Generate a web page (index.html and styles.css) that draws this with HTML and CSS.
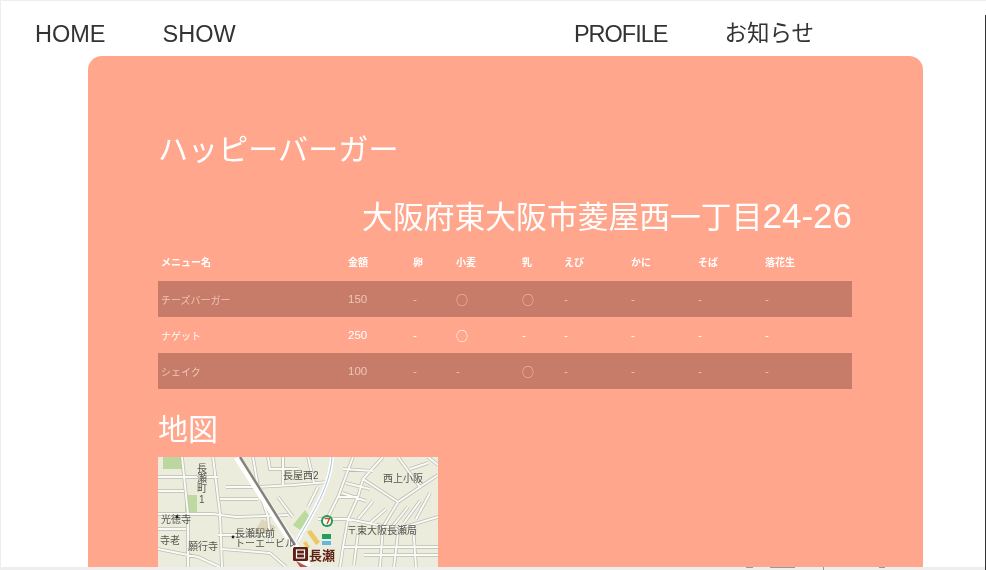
FILE: index.html
```html
<!DOCTYPE html>
<html lang="ja">
<head>
    <meta charset="UTF-8">
    <meta name="viewport" content="width=device-width, initial-scale=1.0">
    <title>ハッピーバーガー</title>
    <link rel="stylesheet" href="styles.css">
</head>
<body>
    <div class="frame">
        <nav class="nav">
            <div class="nav-group">
                <a href="#">HOME</a>
                <a href="#">SHOW</a>
            </div>
            <div class="nav-group">
                <a href="#" class="nav-tight">PROFILE</a>
                <a href="#" class="nav-kana">お知らせ</a>
            </div>
        </nav>

        <main class="card">
            <h2 class="shop-name">ハッピーバーガー</h2>
            <h2 class="shop-address">大阪府東大阪市菱屋西一丁目<span class="address-num">24-26</span></h2>

            <table class="menu">
                <thead>
                    <tr>
                        <th class="col-name">メニュー名</th>
                        <th class="col-price">金額</th>
                        <th class="col-a">卵</th>
                        <th class="col-b">小麦</th>
                        <th class="col-c">乳</th>
                        <th class="col-d">えび</th>
                        <th class="col-d">かに</th>
                        <th class="col-d">そば</th>
                        <th>落花生</th>
                    </tr>
                </thead>
                <tbody>
                    <tr class="dark">
                        <td>チーズバーガー</td><td class="num">150</td><td class="num">-</td><td class="mark">○</td><td class="mark">○</td><td class="num">-</td><td class="num">-</td><td class="num">-</td><td class="num">-</td>
                    </tr>
                    <tr>
                        <td>ナゲット</td><td class="num">250</td><td class="num">-</td><td class="mark">○</td><td class="num">-</td><td class="num">-</td><td class="num">-</td><td class="num">-</td><td class="num">-</td>
                    </tr>
                    <tr class="dark">
                        <td>シェイク</td><td class="num">100</td><td class="num">-</td><td class="num">-</td><td class="mark">○</td><td class="num">-</td><td class="num">-</td><td class="num">-</td><td class="num">-</td>
                    </tr>
                </tbody>
            </table>

            <h2 class="map-title">地図</h2>

            <svg class="map" viewBox="0 0 280 180" width="280" height="180">
                <defs>
                    <path id="roads" d="M0 57H55L78 60L130 58M0 20H60M24 0L30 57L30 110M55 0L62 57L64 110M0 92L40 100L62 110M95 0L100 30L135 28L170 25M125 0V28M150 0L156 26M100 30L110 60L112 85M60 78H110M195 0L180 40L170 60M225 0L205 22L200 40L190 62L240 72L280 60M205 22L240 45L225 70M240 0L262 30L240 45M262 30L280 18M180 40L200 40M190 62L185 90L182 110M225 70L222 110M255 68L258 110M160 62L190 62M185 90H280M120 40L135 60M110 0L112 12H140M185 12L215 14M188 26L212 32M184 36L208 44M215 44L200 62M228 52L212 66M250 50L234 70M262 44L246 66M272 36L258 62M270 0L280 8M252 12L270 6M68 30L96 30M62 42H100M0 72H28M0 34H26M64 92L112 96M112 96L128 110M160 30L150 50M200 76L196 108M240 76L236 110M206 98H280"/>
                </defs>
                <rect width="280" height="180" fill="#ebecdc"/>
                <rect x="5" y="0" width="20" height="12" fill="#bcd6a0"/>
                <rect x="27" y="38" width="12" height="17" fill="#bcd9a0"/>
                <path d="M135 68L147 53L152 60L142 73Z" fill="#bcd9a0"/>
                <path d="M104 62L118 70L112 78L98 72Z" fill="#ddd6b8"/>
                <use href="#roads" fill="none" stroke="#bcbdb4" stroke-width="3.500"/>
                <use href="#roads" fill="none" stroke="#fbfbf6" stroke-width="2"/>
                <path d="M79 0L150 110" fill="none" stroke="#fff" stroke-width="7"/>
                <path d="M82 0L137 88" fill="none" stroke="#85827c" stroke-width="2.500"/>
                <path d="M174 0C172 30 155 55 139 84" fill="none" stroke="#fff" stroke-width="4"/>
                <path d="M174 0C172 30 155 55 139 84" fill="none" stroke="#a9c3dc" stroke-width="1"/>
                <path d="M149 75L153 73L162 85L158 88ZM145 86L148 84L152 90L149 92Z" fill="#ecc763"/>
                <path d="M138 104L150 110H142Z" fill="#b4544c"/>

                <g class="map-label">
                    <text x="39" y="15">長</text>
                    <text x="39" y="25">瀬</text>
                    <text x="39" y="35">町</text>
                    <text x="41" y="46">1</text>
                    <text x="125" y="22">長屋西2</text>
                    <text x="225" y="25">西上小阪</text>
                    <text x="77" y="80">長瀬駅前</text>
                    <text x="77" y="90">トーエービル</text>
                    <text x="189" y="77">〒東大阪長瀬局</text>
                    <text x="30" y="93">願行寺</text>
                    <text x="3" y="66">光徳寺</text>
                    <text x="2" y="87">寺老</text>
                </g>
                <circle cx="75" cy="80" r="1.400" fill="#222"/>
                <circle cx="19" cy="60" r="1.400" fill="#222"/>

                <circle cx="169" cy="64" r="6" fill="#1d9a52"/>
                <circle cx="169" cy="64" r="4" fill="#fff"/>
                <path d="M166.500 61.500H171.500L169 67" fill="none" stroke="#d8472f" stroke-width="1.500"/>
                <rect x="164" y="77" width="9" height="5" fill="#22a05a"/>
                <rect x="164" y="84" width="9" height="4" fill="#62b8dd"/>

                <rect x="135" y="90" width="15" height="14" rx="1.500" fill="#5e1f14"/>
                <rect x="138.500" y="93" width="8" height="8" fill="none" stroke="#fff" stroke-width="1.200"/>
                <path d="M138.500 97H146.500" stroke="#fff" stroke-width="1"/>
                <text x="151" y="103" class="map-station">長瀬</text>
            </svg>
        </main>

        <div class="status-strip">
            <span class="tick tick-a"></span>
            <span class="tick tick-b"></span>
            <span class="tick tick-c"></span>
            <span class="tick tick-d"></span>
        </div>
    </div>
</body>
</html>
```

FILE: styles.css
```css
html, body {
    margin: 0;
    padding: 0;
    height: 100%;
    overflow: hidden;
}

body {
    font-family: "Liberation Sans", "Noto Sans CJK JP", sans-serif;
    background: #fff;
    color: #333;
}

.frame {
    position: relative;
    height: 570px;
    box-sizing: border-box;
    overflow: hidden;
    border-top: 1px solid #eee;
    border-left: 1px solid #eee;
}

/* dark edge of the window on the right */
.frame::after {
    content: "";
    position: absolute;
    top: 14px;
    right: 0;
    bottom: 0;
    width: 1px;
    background: #333;
}

.nav {
    display: flex;
    justify-content: space-between;
    height: 55px;
    padding: 19px 172px 0 34px;
    box-sizing: border-box;
    filter: blur(0.3px);
}

.nav-group {
    display: flex;
    gap: 57px;
}

.nav a {
    color: #333;
    font-size: 23.500px;
    line-height: 28px;
    text-decoration: none;
}

.nav a.nav-tight {
    letter-spacing: -1px;
}

.nav a.nav-kana {
    font-size: 22.500px;
}

.card {
    width: 835px;
    box-sizing: border-box;
    margin-left: 87px;
    padding: 74px 71px 40px 70px;
    background: #ffa68c;
    border-radius: 14px;
    color: #fff;
}

.shop-name, .shop-address, .map-title {
    margin: 0;
    font-weight: normal;
    font-size: 30px;
    line-height: 40px;
    filter: blur(0.3px);
}

.shop-name {
    letter-spacing: 0.1px;
}

.shop-address {
    margin-top: 24px;
    font-size: 30.800px;
    line-height: 44px;
    text-align: right;
}

.address-num {
    font-size: 35px;
}

.menu {
    width: 694px;
    margin-top: 5px;
    border-collapse: collapse;
    table-layout: fixed;
    font-size: 10px;
    filter: blur(0.4px);
}

.menu th, .menu td {
    height: 36px;
    padding: 0 0 0 3px;
    box-sizing: border-box;
    text-align: left;
}

.menu th {
    padding-bottom: 4px;
}

.col-name { width: 187px; }
.col-price { width: 65px; }
.col-a { width: 43px; }
.col-b { width: 66px; }
.col-c { width: 42px; }
.col-d { width: 67px; }

.menu .dark {
    background: #c67c68;
    color: #f0c4b6;
}

.menu td.num {
    font-size: 11.500px;
}

.menu td.mark {
    font-family: "Noto Sans CJK JP", sans-serif;
    font-size: 12px;
}

.map-title {
    margin-top: 21px;
}

.map {
    display: block;
    margin-top: 7px;
    filter: blur(0.5px);
}

.map-label text {
    font-size: 10px;
    fill: #55564e;
}

.map-station {
    font-size: 13px;
    font-weight: bold;
    fill: #5e1f14;
}

.status-strip {
    position: absolute;
    left: 0;
    right: 0;
    bottom: 0;
    display: flex;
    height: 3px;
    background: #eee;
}

.tick {
    height: 1px;
    background: #999;
}

.tick-a { width: 7px; margin-left: 745px; }
.tick-b { width: 25px; margin-left: 17px; }
.tick-c { width: 1px; height: 3px; margin-left: 28px; }
.tick-d { width: 6px; margin-left: 55px; }
```
